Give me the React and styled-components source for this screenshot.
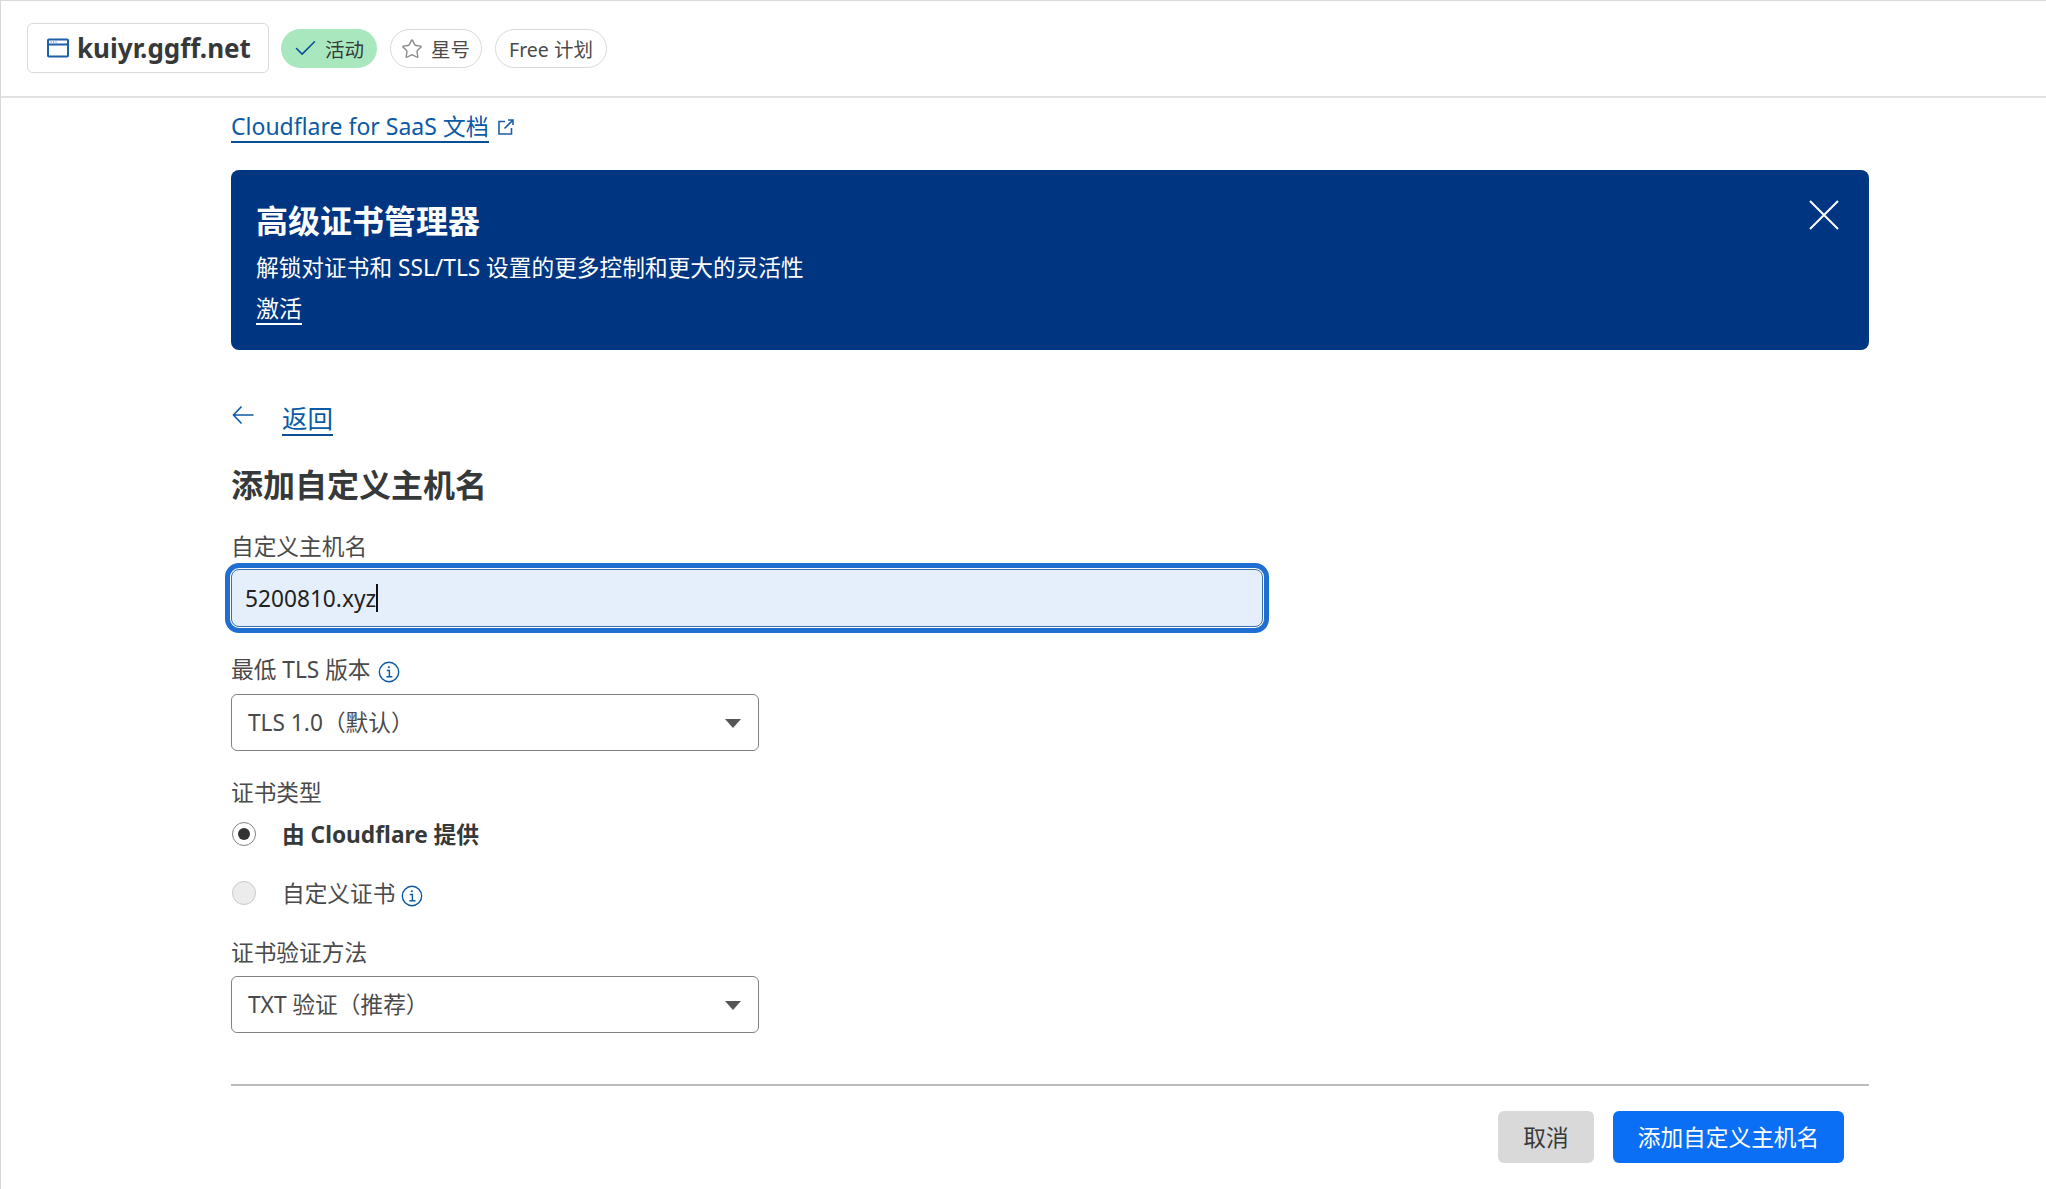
import React from 'react';
import styled, { createGlobalStyle } from 'styled-components';
import { Check, Star } from 'lucide-react';

const GlobalStyle = createGlobalStyle`
  html, body {
    margin: 0;
    padding: 0;
    background: #fff;
  }
  body {
    font-family: "Noto Sans", "Noto Sans CJK SC", sans-serif;
    color: #36393a;
  }
`;

const Page = styled.div`
  width: 2046px;
  height: 1189px;
  box-sizing: border-box;
  border-top: 1px solid #d9d9d9;
  border-left: 1px solid #d9d9d9;
  overflow: hidden;
`;

const Header = styled.header`
  height: 97px;
  box-sizing: border-box;
  border-bottom: 2px solid #e2e2e2;
  display: flex;
  align-items: center;
  padding: 0 0 2px 26px;
  gap: 12px;
`;

const DomainBox = styled.div`
  width: 242px;
  height: 50px;
  box-sizing: border-box;
  border: 1px solid #d9d9d9;
  border-radius: 6px;
  display: flex;
  align-items: center;
  padding-left: 19px;
  gap: 8px;
  font-size: 26px;
  font-weight: 700;
  color: #36393a;
`;

const Pill = styled.div`
  height: 39px;
  box-sizing: border-box;
  border-radius: 20px;
  display: flex;
  align-items: center;
  gap: ${props => props.$gap || 0}px;
  padding: 0 ${props => props.$right || 13}px 0 ${props => props.$left || 13}px;
  font-size: 19.5px;
  color: ${props => props.$active ? '#36393a' : '#4a4a4a'};
  background: ${props => props.$active ? '#a9e8bf' : '#fff'};
  border: ${props => props.$active ? 'none' : '1px solid #d9d9d9'};
  margin: 2px ${props => props.$after || 0}px 0 0;
`;

const Content = styled.main`
  width: 1638px;
  margin-left: 230px;
`;

const DocsRow = styled.div`
  display: flex;
  align-items: center;
  gap: 8px;
  height: 72px;
  padding-bottom: 15px;
  box-sizing: border-box;
`;

const TextLink = styled.a`
  color: ${props => props.$light ? '#fff' : '#0a5aa5'};
  font-size: ${props => props.$size || 23}px;
  line-height: 30px;
  text-decoration: none;
  border-bottom: 2px solid ${props => props.$light ? '#fff' : '#0a4f96'};
  display: inline-block;
`;

const Banner = styled.section`
  height: 180px;
  box-sizing: border-box;
  background: #003681;
  border-radius: 8px;
  color: #fff;
  padding: 31px 25px 0;
  position: relative;
`;

const BannerTitle = styled.h2`
  margin: 0;
  font-size: 32px;
  line-height: 40px;
  font-weight: 700;
`;

const BannerText = styled.p`
  margin: 0;
  font-size: 22.7px;
  line-height: 32px;
  padding-top: 11px;
`;

const BannerAction = styled.div`
  margin-top: 9px;
`;

const CloseButton = styled.button`
  position: absolute;
  top: 30px;
  right: 30px;
  width: 30px;
  height: 30px;
  padding: 0;
  background: none;
  border: none;
  display: flex;
`;

const BackRow = styled.div`
  display: flex;
  align-items: flex-start;
  gap: 27px;
  margin-top: 53px;
  height: 34px;
`;

const BackLink = styled(TextLink)`
  line-height: 31px;
`;

const PageTitle = styled.h1`
  margin: 26px 0 0;
  font-size: 32px;
  line-height: 44px;
  font-weight: 700;
  color: #36393a;
`;

const FieldLabel = styled.label`
  display: flex;
  align-items: center;
  gap: 7px;
  font-size: 22.7px;
  line-height: 30px;
  color: #4a4a4a;
  margin-top: ${props => props.$top}px;
`;

const InputRing = styled.div`
  width: 1044px;
  height: 70px;
  margin: 1px 0 0 -6px;
  box-sizing: border-box;
  border: 5px solid #1f6fd2;
  border-radius: 14px;
  background: #fff;
  padding: 1px;
`;

const TextInput = styled.div`
  height: 58px;
  box-sizing: border-box;
  border: 1px solid #3d6fa8;
  border-radius: 8px;
  background: #e5effb;
  display: flex;
  align-items: center;
  padding-left: 13px;
  font-size: 22.7px;
  color: #222;
`;

const Caret = styled.span`
  display: inline-block;
  width: 2px;
  height: 28px;
  background: #111;
`;

const Select = styled.div`
  width: 528px;
  height: 57px;
  box-sizing: border-box;
  border: 1px solid #808285;
  border-radius: 6px;
  display: flex;
  align-items: center;
  justify-content: space-between;
  padding: 0 17px 2px 16px;
  margin-top: ${props => props.$top || 0}px;
  font-size: 22.7px;
  color: #4a4a4a;
`;

const SelectArrow = styled.span`
  width: 0;
  height: 0;
  border-left: 8px solid transparent;
  border-right: 8px solid transparent;
  border-top: 9px solid #555;
  margin-top: 4px;
`;

const RadioRow = styled.div`
  display: flex;
  align-items: center;
  gap: 26px;
  height: 32px;
  margin-top: ${props => props.$top}px;
  padding-left: 1px;
`;

const RadioDot = styled.span`
  width: 24px;
  height: 24px;
  flex: none;
  box-sizing: border-box;
  border-radius: 50%;
  border: 1px solid ${props => props.$on ? '#808285' : '#c9c9c9'};
  background: ${props => props.$on ? '#fff' : '#ececec'};
  display: flex;
  align-items: center;
  justify-content: center;
  margin-top: -3px;
  &::after {
    content: '';
    display: ${props => props.$on ? 'block' : 'none'};
    width: 12px;
    height: 12px;
    border-radius: 50%;
    background: #333;
  }
`;

const RadioLabel = styled.span`
  display: flex;
  align-items: center;
  gap: 6px;
  font-size: 22.7px;
  line-height: 30px;
  font-weight: ${props => props.$bold ? 700 : 400};
  color: ${props => props.$bold ? '#36393a' : '#4a4a4a'};
`;

const Divider = styled.hr`
  margin: 51px 0 0;
  border: none;
  border-top: 2px solid #bcbcbc;
`;

const Actions = styled.div`
  display: flex;
  justify-content: flex-end;
  gap: 19px;
  margin-top: 25px;
  padding-right: 25px;
`;

const Button = styled.button`
  height: 52px;
  border: none;
  border-radius: 6px;
  padding: 0 0 2px;
  width: ${props => props.$primary ? 231 : 96}px;
  font-family: inherit;
  font-size: 22.7px;
  color: ${props => props.$primary ? '#fff' : '#36393a'};
  background: ${props => props.$primary ? '#0b6ff5' : '#d9d9d9'};
`;

const SiteIcon = () => (
  <svg width="22" height="22" viewBox="0 0 22 22" fill="none">
    <rect x="1" y="2.5" width="20" height="17" rx="1" stroke="#1d5fa8" strokeWidth="2" />
    <path d="M1 7.5h20" stroke="#1d5fa8" strokeWidth="2" />
    <path d="M3.5 5h1M6 5h1M8.5 5h1" stroke="#1d5fa8" strokeWidth="1.2" />
  </svg>
);

const ExternalIcon = () => (
  <svg width="18" height="18" viewBox="0 0 18 18" fill="none" stroke="#1d5fa8" strokeWidth="1.6">
    <path d="M8 3.5H2v12.5h12.5V10" />
    <path d="M7.5 10.5L16 2M11 2h5v5" />
  </svg>
);

const InfoIcon = () => (
  <svg width="22" height="22" viewBox="0 0 22 22" fill="none" stroke="#0a5aa5" style={{ marginTop: 3 }}>
    <circle cx="11" cy="11" r="9.7" strokeWidth="1.4" />
    <path d="M8.8 9.5h2.6v6.2M8.4 15.8h6" strokeWidth="1.4" />
    <circle cx="10.9" cy="6.2" r="0.7" fill="#0a5aa5" strokeWidth="0.8" />
  </svg>
);

const CloseIcon = () => (
  <svg width="30" height="30" viewBox="0 0 30 30" fill="none" stroke="#fff" strokeWidth="2">
    <path d="M1 1l28 28M29 1L1 29" />
  </svg>
);

const BackIcon = () => (
  <svg width="24" height="24" viewBox="0 0 24 24" fill="none" stroke="#0a5aa5" strokeWidth="1.6">
    <path d="M2.5 12h20M10.5 3.5L2.5 12l8 8.5" />
  </svg>
);

export default function App() {
  return (
    <Page>
      <GlobalStyle />
      <Header>
        <DomainBox>
          <SiteIcon />
          kuiyr.ggff.net
        </DomainBox>
        <Pill $active $left={11} $right={13} $gap={6} $after={1}>
          <Check size={27} color="#0a4f96" strokeWidth={1.4} />
          活动
        </Pill>
        <Pill $left={10} $right={11} $gap={8} $after={1}>
          <Star size={22} color="#8a8a8a" strokeWidth={1.5} />
          星号
        </Pill>
        <Pill>Free 计划</Pill>
      </Header>
      <Content>
        <DocsRow>
          <TextLink>Cloudflare for SaaS 文档</TextLink>
          <ExternalIcon />
        </DocsRow>
        <Banner>
          <BannerTitle>高级证书管理器</BannerTitle>
          <BannerText>解锁对证书和 SSL/TLS 设置的更多控制和更大的灵活性</BannerText>
          <BannerAction>
            <TextLink $light>激活</TextLink>
          </BannerAction>
          <CloseButton>
            <CloseIcon />
          </CloseButton>
        </Banner>
        <BackRow>
          <BackIcon />
          <BackLink $size={25.5}>返回</BackLink>
        </BackRow>
        <PageTitle>添加自定义主机名</PageTitle>
        <FieldLabel $top={25}>自定义主机名</FieldLabel>
        <InputRing>
          <TextInput>
            5200810.xyz
            <Caret />
          </TextInput>
        </InputRing>
        <FieldLabel $top={22}>
          最低 TLS 版本
          <InfoIcon />
        </FieldLabel>
        <Select $top={9}>
          TLS 1.0（默认）
          <SelectArrow />
        </Select>
        <FieldLabel $top={27}>证书类型</FieldLabel>
        <RadioRow $top={11}>
          <RadioDot $on />
          <RadioLabel $bold>由 Cloudflare 提供</RadioLabel>
        </RadioRow>
        <RadioRow $top={27}>
          <RadioDot />
          <RadioLabel>
            自定义证书
            <InfoIcon />
          </RadioLabel>
        </RadioRow>
        <FieldLabel $top={28}>证书验证方法</FieldLabel>
        <Select $top={8}>
          TXT 验证（推荐）
          <SelectArrow />
        </Select>
        <Divider />
        <Actions>
          <Button>取消</Button>
          <Button $primary>添加自定义主机名</Button>
        </Actions>
      </Content>
    </Page>
  );
}
